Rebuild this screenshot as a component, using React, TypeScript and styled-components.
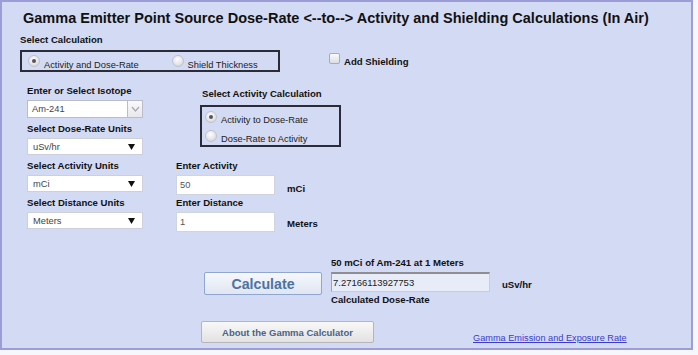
import styled, { createGlobalStyle } from "styled-components";
import { FC, ReactNode } from "react";

const GlobalStyle = createGlobalStyle`
  html, body {
    margin: 0;
    padding: 0;
    background: #f6f7fc;
  }
  body {
    font-family: "Liberation Sans", Arial, sans-serif;
    color: #111;
  }
`;

const Panel = styled['div']`
    box-sizing: border-box;
    width: 693px;
    height: 350px;
    border: 2px solid #9c9cd6;
    background: #d3daf4;
    padding: 7px 0 0 18px;
    display: flex;
    flex-direction: column;
`;

const Title = styled['h1']`
    margin: 0 0 0 3px;
    font-size: 14.5px;
    line-height: 18px;
    font-weight: bold;
    white-space: nowrap;
`;

const Label = styled['div']`
    font-size: 9.6px;
    line-height: 12px;
    font-weight: bold;
    white-space: nowrap;
`;

const TopRow = styled['div']`
    display: flex;
    margin-top: 7px;
`;

const Column = styled['div']<{ $gap?: number }>`
    display: flex;
    flex-direction: column;
    gap: ${p => p.$gap ?? 0}px;
`;

const FramedBox = styled['div']<{ $width: number }>`
    box-sizing: border-box;
    width: ${p => p.$width}px;
    border: 2px solid #2c2c38;
`;

const InlineRadios = styled['div']`
    display: flex;
    align-items: center;
    height: 18px;
    padding-left: 6px;
    gap: 33px;
`;

const StackedRadios = styled['div']`
    display: flex;
    flex-direction: column;
    padding-left: 3px;
`;

const Option = styled['label']<{ $height?: number }>`
    display: flex;
    align-items: center;
    gap: 4px;
    height: ${p => p.$height ?? 18}px;
    font-size: 9.3px;
    color: #222;
    white-space: nowrap;
`;

const OptionText = styled['span']`
    padding-top: 7px;
`;

const RadioDot = styled['span']<{ $checked?: boolean }>`
    position: relative;
    flex: none;
    box-sizing: border-box;
    width: 12px;
    height: 12px;
    border-radius: 50%;
    border: 1px solid #c0c2cb;
    background: radial-gradient(circle at 45% 35%, #fdfdfd 0%, #e4e5eb 55%, #c9ccd5 100%);
    &::after {
        content: "";
        display: ${p => (p.$checked ? "block" : "none")};
        position: absolute;
        left: 3px;
        top: 3px;
        width: 4px;
        height: 4px;
        border-radius: 50%;
        background: #555;
    }
`;

const CheckGroup = styled['label']`
    display: flex;
    align-items: flex-start;
    gap: 4px;
    margin: 19px 0 0 49px;
`;

const CheckBox = styled['span']`
    box-sizing: border-box;
    width: 11px;
    height: 11px;
    border: 1px solid #a9abb6;
    border-radius: 2px;
    background: linear-gradient(#fbfbfd, #dcdde4);
`;

const CheckText = styled(Label)`
    padding-top: 3px;
`;

const UpperForm = styled['div']`
    display: flex;
    margin: 13px 0 0 7px;
`;

const FieldWrap = styled['div']<{ $after?: number }>`
    display: flex;
    flex-direction: column;
    gap: 3px;
    margin-bottom: ${p => p.$after ?? 0}px;
`;

const ActivityCalc = styled['div']`
    display: flex;
    flex-direction: column;
    gap: 5px;
    margin: 3px 0 0 57px;
`;

const ActivityLabel = styled(Label)`
    padding-left: 2px;
`;

const LowerForm = styled['div']`
    display: grid;
    grid-template-columns: 116px 99px auto;
    grid-template-rows: 15px 22px 15px 20px;
    column-gap: 33px;
    margin: 5px 0 0 7px;
    & > :nth-child(3n) {
        margin-left: -21px;
    }
`;

const UnitText = styled(Label)`
    align-self: end;
    padding-bottom: 2px;
`;

const ControlBase = styled['div']<{ $w: number; $h: number }>`
    box-sizing: border-box;
    width: ${p => p.$w}px;
    height: ${p => p.$h}px;
    display: flex;
    align-items: center;
    background: #fff;
    font-size: 9.3px;
    color: #444;
`;

const SelectBox = styled(ControlBase)`
    border: 1px solid #cdd0dc;
    padding: 0 7px 0 5px;
    justify-content: space-between;
`;

const ComboBox = styled(ControlBase)`
    border: 1px solid #b9bccb;
    padding-left: 4px;
    justify-content: space-between;
`;

const ComboButton = styled['span']`
    box-sizing: border-box;
    width: 15px;
    height: 100%;
    border-left: 1px solid #b9bccb;
    background: linear-gradient(#fafafa, #e8e8ec);
    display: flex;
    align-items: center;
    justify-content: center;
`;

const TextBox = styled(ControlBase)`
    border: 1px solid #d0d4e0;
    padding-left: 3px;
    color: #555;
`;

const ResultGrid = styled['div']`
    display: grid;
    grid-template-columns: 118px 159px auto;
    grid-template-rows: 15px 22px 12px;
    column-gap: 9px;
    margin: 25px 0 0 184px;
`;

const CalcButton = styled['button']`
    grid-row: 2 / span 2;
    box-sizing: border-box;
    width: 118px;
    height: 23px;
    align-self: start;
    padding: 0;
    border: 1px solid #8fa6d2;
    border-radius: 2px;
    background: linear-gradient(#f6f8fc, #dfe5f2);
    font-family: inherit;
    font-size: 14.2px;
    font-weight: bold;
    color: #4e72a2;
`;

const OutputBox = styled(ControlBase)`
    border: 1px solid #c9cdda;
    border-top: 2px solid #8e8e92;
    border-left: 1px solid #a3a3aa;
    background: #e8ecf8;
    padding-left: 1px;
    color: #222;
    font-size: 9.5px;
`;

const ResultUnit = styled(Label)`
    align-self: center;
    margin: 4px 0 0 3px;
`;

const Footer = styled['div']`
    display: flex;
    align-items: flex-end;
    margin: 15px 0 0 181px;
`;

const AboutButton = styled['button']`
    box-sizing: border-box;
    width: 173px;
    height: 22px;
    padding: 0;
    border: 1px solid #b6b6b8;
    border-radius: 2px;
    background: linear-gradient(#f8f8f8, #e2e2e2);
    font-family: inherit;
    font-size: 9.5px;
    font-weight: bold;
    color: #4c6286;
`;

const Link = styled['a']`
    margin: 0 0 -1px 99px;
    font-size: 9.2px;
    line-height: 12px;
    color: #3b3bd0;
    text-decoration: underline;
`;

const SelectArrow: FC = () => (
    <svg width="7" height="6" viewBox="0 0 7 6">
        <polygon points="0,0 7,0 3.5,6" fill="#111" />
    </svg>
);

const Chevron: FC = () => (
    <svg width="9" height="6" viewBox="0 0 9 6">
        <polyline points="1,1 4.5,5 8,1" fill="none" stroke="#a8a8b0" strokeWidth="1.2" />
    </svg>
);

interface IField {
    label: string;
    after?: number;
    children: ReactNode;
}

const Field: FC<IField> = ({ label, after, children }) => (
    <FieldWrap $after={after}>
        <Label>{label}</Label>
        {children}
    </FieldWrap>
);

const Select: FC<{ value: string }> = ({ value }) => (
    <SelectBox $w={116} $h={17}>
        <span>{value}</span>
        <SelectArrow />
    </SelectBox>
);

const Radio: FC<{ text: string; checked?: boolean; height?: number }> = ({ text, checked, height }) => (
    <Option $height={height}>
        <RadioDot $checked={checked} />
        <OptionText>{text}</OptionText>
    </Option>
);

export default function App() {
    return (
        <>
            <GlobalStyle />
            <Panel>
                <Title>Gamma Emitter Point Source Dose-Rate &lt;--to--&gt; Activity and Shielding Calculations (In Air)</Title>

                <TopRow>
                    <Column $gap={4}>
                        <Label>Select Calculation</Label>
                        <FramedBox $width={260}>
                            <InlineRadios>
                                <Radio text="Activity and Dose-Rate" checked />
                                <Radio text="Shield Thickness" />
                            </InlineRadios>
                        </FramedBox>
                    </Column>
                    <CheckGroup>
                        <CheckBox />
                        <CheckText>Add Shielding</CheckText>
                    </CheckGroup>
                </TopRow>

                <UpperForm>
                    <Column>
                        <Field label="Enter or Select Isotope" after={5}>
                            <ComboBox $w={116} $h={18}>
                                <span>Am-241</span>
                                <ComboButton><Chevron /></ComboButton>
                            </ComboBox>
                        </Field>
                        <Field label="Select Dose-Rate Units">
                            <Select value="uSv/hr" />
                        </Field>
                    </Column>
                    <ActivityCalc>
                        <ActivityLabel>Select Activity Calculation</ActivityLabel>
                        <FramedBox $width={141}>
                            <StackedRadios>
                                <Radio text="Activity to Dose-Rate" checked height={19} />
                                <Radio text="Dose-Rate to Activity" height={19} />
                            </StackedRadios>
                        </FramedBox>
                    </ActivityCalc>
                </UpperForm>

                <LowerForm>
                    <Label>Select Activity Units</Label>
                    <Label>Enter Activity</Label>
                    <span />
                    <Select value="mCi" />
                    <TextBox $w={99} $h={20}>50</TextBox>
                    <UnitText>mCi</UnitText>
                    <Label>Select Distance Units</Label>
                    <Label>Enter Distance</Label>
                    <span />
                    <Select value="Meters" />
                    <TextBox $w={99} $h={20}>1</TextBox>
                    <UnitText>Meters</UnitText>
                </LowerForm>

                <ResultGrid>
                    <span />
                    <Label>50 mCi of Am-241 at 1 Meters</Label>
                    <span />
                    <CalcButton>Calculate</CalcButton>
                    <OutputBox $w={159} $h={20}>7.27166113927753</OutputBox>
                    <ResultUnit>uSv/hr</ResultUnit>
                    <Label>Calculated Dose-Rate</Label>
                </ResultGrid>

                <Footer>
                    <AboutButton>About the Gamma Calculator</AboutButton>
                    <Link href="#">Gamma Emission and Exposure Rate</Link>
                </Footer>
            </Panel>
        </>
    );
}
